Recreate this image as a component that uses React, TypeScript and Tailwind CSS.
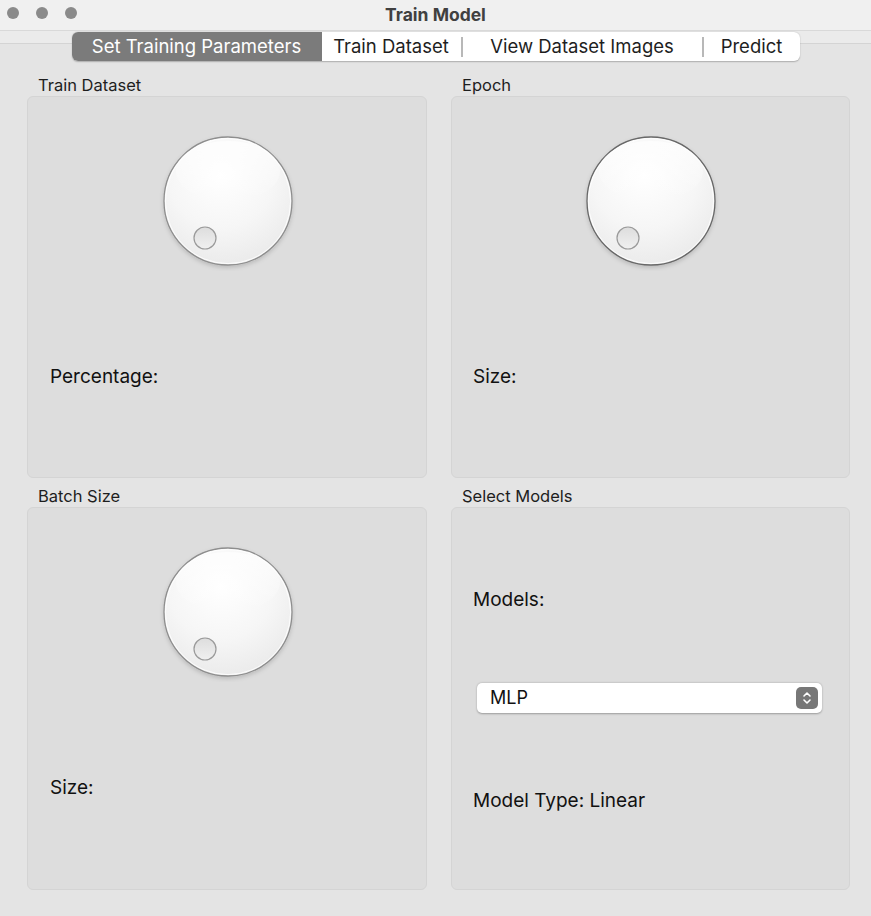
import type { JSX, ReactNode } from 'react';

const FONT = { fontFamily: 'Inter, "Noto Sans", "Liberation Sans", sans-serif' };

function Knob({ dark = false }: { readonly dark?: boolean }): JSX.Element {
  const id = dark ? 'knob-dark' : 'knob-light';
  return (
    <svg width="140" height="140" viewBox="0 0 140 140" aria-hidden="true">
      <defs>
        <radialGradient id={`${id}-fill`} cx="0.45" cy="0.3" r="0.75">
          <stop offset="0" stopColor="#ffffff" />
          <stop offset="0.55" stopColor="#f6f6f6" />
          <stop offset="1" stopColor="#e9e9e9" />
        </radialGradient>
        <linearGradient id={`${id}-gloss`} x1="0" y1="0" x2="0" y2="1">
          <stop offset="0" stopColor="#ffffff" stopOpacity="0.7" />
          <stop offset="1" stopColor="#ffffff" stopOpacity="0" />
        </linearGradient>
        <linearGradient id={`${id}-dot`} x1="0" y1="0" x2="0" y2="1">
          <stop offset="0" stopColor="#dddddd" />
          <stop offset="1" stopColor="#f0f0f0" />
        </linearGradient>
        <filter id={`${id}-shadow`} x="-20%" y="-20%" width="140%" height="140%">
          <feDropShadow dx="0" dy="2" stdDeviation="2.2" floodColor="#000" floodOpacity="0.16" />
        </filter>
      </defs>
      <circle
        cx="70"
        cy="70"
        r="64"
        fill={`url(#${id}-fill)`}
        stroke={dark ? '#686868' : '#8e8e8e'}
        strokeWidth="1.3"
        filter={`url(#${id}-shadow)`}
      />
      <ellipse cx="70" cy="40" rx="52" ry="30" fill={`url(#${id}-gloss)`} />
      <circle cx="70" cy="70" r="62.6" fill="none" stroke="#ffffff" strokeWidth="1" opacity="0.85" />
      <circle cx="47" cy="107" r="11" fill={`url(#${id}-dot)`} stroke="#9a9a9a" strokeWidth="1.2" />
    </svg>
  );
}

function GroupBox({ title, children }: { readonly title: string; readonly children: ReactNode }): JSX.Element {
  return (
    <div className="flex min-h-0 flex-col">
      <div className="h-[19px] pl-[11px] text-[16.5px] leading-[17px] text-[#1e1e1e]">{title}</div>
      <div className="relative flex flex-1 flex-col rounded-[6px] border border-[#d4d4d4] bg-[#dddddd]">
        {children}
      </div>
    </div>
  );
}

function StepperIcon(): JSX.Element {
  return (
    <span className="flex h-[22px] w-[22px] items-center justify-center rounded-[5px] bg-[#777777]">
      <svg width="10" height="14" viewBox="0 0 10 14" fill="none" stroke="#ffffff" strokeWidth="1.6" strokeLinecap="round" strokeLinejoin="round">
        <path d="M2 5 L5 2 L8 5" />
        <path d="M2 9 L5 12 L8 9" />
      </svg>
    </span>
  );
}

export default function App(): JSX.Element {
  const tabs = ['Train Dataset', 'View Dataset Images', 'Predict'];
  const widths = ['w-[139px]', 'w-[239px]', 'w-[96px]'];

  return (
    <div className="flex h-[916px] w-[871px] flex-col overflow-hidden bg-[#e4e4e4]" style={FONT}>
      {/* title bar */}
      <div className="relative flex h-[31px] shrink-0 items-center justify-center border-b border-[#d9d9d9] bg-[#f0f0f0]">
        <div className="absolute left-[7px] top-[7px] flex gap-[17px]">
          <span className="h-[12px] w-[12px] rounded-full bg-[#8a8a8a]" />
          <span className="h-[12px] w-[12px] rounded-full bg-[#8a8a8a]" />
          <span className="h-[12px] w-[12px] rounded-full bg-[#8a8a8a]" />
        </div>
        <span className="text-[17.5px] font-bold text-[#404040]">Train Model</span>
      </div>

      {/* tab strip */}
      <div className="h-[46px] shrink-0">
        <div className="h-[13px] border-b border-[#d4d4d4] bg-[#ebebeb]" />
        <div className="-mt-[12px] flex justify-center">
          <div className="flex h-[29px] rounded-[6px] bg-white text-[18.5px] shadow-[0_0.5px_1.5px_rgba(0,0,0,0.25)]">
            <div className="flex w-[250px] items-center justify-center rounded-l-[6px] bg-[#7b7b7b] text-white">
              Set Training Parameters
            </div>
            {tabs.map((tab, i) => (
              <div key={tab} className="flex items-center">
                {i > 0 && <span className="h-[20px] w-[2px] bg-[#b8b8b8]" />}
                <span className={`${widths[i]} text-center text-[#1e1e1e]`}>{tab}</span>
              </div>
            ))}
          </div>
        </div>
      </div>

      {/* group boxes */}
      <div className="grid flex-1 grid-cols-[400px_399px] grid-rows-[401px_402px] gap-x-[24px] gap-y-[10px] pb-[26px] pl-[27px] text-[19px] leading-[24px] text-[#111111]">
        <GroupBox title="Train Dataset">
          <div className="flex justify-center pt-[34px] pl-[1px]">
            <Knob />
          </div>
          <div className="pl-[22px] pt-[94px]">Percentage:</div>
        </GroupBox>

        <GroupBox title="Epoch">
          <div className="flex justify-center pt-[34px] pl-[1px]">
            <Knob dark />
          </div>
          <div className="pl-[21px] pt-[94px]">Size:</div>
        </GroupBox>

        <GroupBox title="Batch Size">
          <div className="flex justify-center pt-[34px] pl-[1px]">
            <Knob />
          </div>
          <div className="pl-[22px] pt-[94px]">Size:</div>
        </GroupBox>

        <GroupBox title="Select Models">
          <div className="pl-[21px] pt-[80px]">Models:</div>
          <div className="mt-[71px] ml-[25px] flex h-[30px] w-[345px] items-center justify-between rounded-[5px] bg-white pl-[13px] pr-[4px] shadow-[0_0.5px_2px_rgba(0,0,0,0.3)]">
            <span className="text-[18px]">MLP</span>
            <StepperIcon />
          </div>
          <div className="pl-[21px] pt-[76px]">Model Type: Linear</div>
        </GroupBox>
      </div>
    </div>
  );
}
